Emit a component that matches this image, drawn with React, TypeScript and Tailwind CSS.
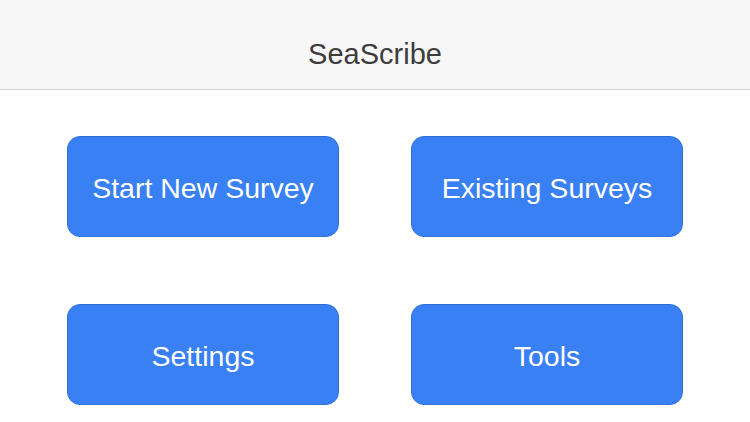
import React from "react";

const buttons = ["Start New Survey", "Existing Surveys", "Settings", "Tools"];

const App = () => {
  return (
    <div className="w-[750px] h-[422px] bg-white overflow-hidden" style={{ fontFamily: '"Liberation Sans", Arial, sans-serif' }}>
      {/* Nav bar */}
      <header className="h-[90px] bg-[#f7f7f7] border-b border-[#cfcfcf] flex items-center justify-center pt-[20px]">
        <h1 className="text-[29px] text-[#3d3d3d]">SeaScribe</h1>
      </header>

      {/* Menu grid */}
      <main className="grid grid-cols-2 gap-x-[72px] gap-y-[67px] px-[67px] pt-[46px]">
        {buttons.map((label) => (
          <button
            key={label}
            className="h-[101px] rounded-[13px] bg-[#3880f3] border border-[#2e6fd8] text-white text-[28.5px] flex items-center justify-center pt-[3px]"
          >
            {label}
          </button>
        ))}
      </main>
    </div>
  );
};

export default App;
